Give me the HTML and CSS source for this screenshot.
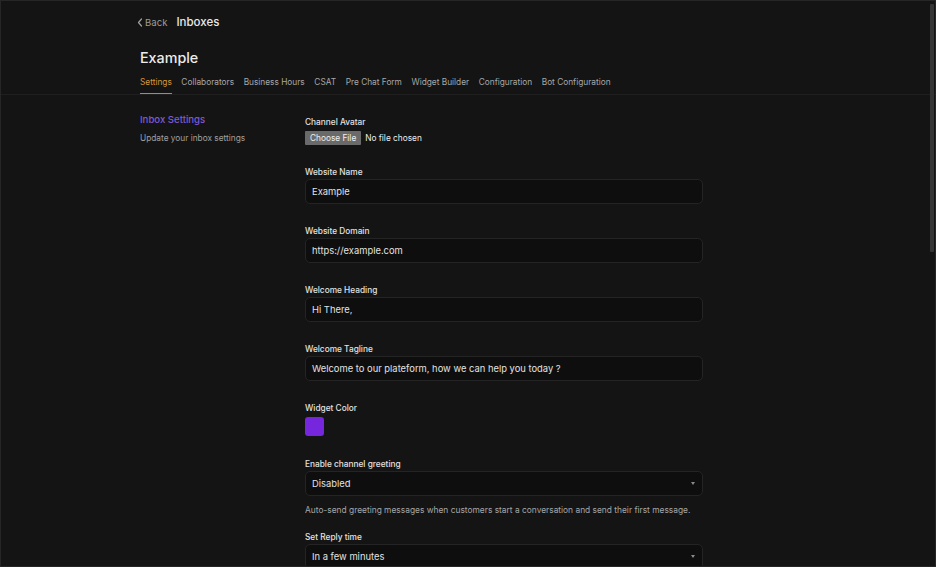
FILE: index.html
```html
<!DOCTYPE html>
<html>
<head>
<meta charset="utf-8">
<link rel="stylesheet" href="styles.css">
</head>
<body>
<div class="page">
  <header class="head">
    <div class="crumbs">
      <a class="back"><svg class="chev" width="6" height="9" viewBox="0 0 6 9"><path d="M4.5 1 L1.5 4.5 L4.5 8" fill="none" stroke="currentColor" stroke-width="1.2" stroke-linecap="round" stroke-linejoin="round"/></svg>Back</a>
      <span class="crumb-title">Inboxes</span>
    </div>
    <h1 class="title">Example</h1>
    <nav class="tabs">
      <span class="tab active">Settings</span>
      <span class="tab">Collaborators</span>
      <span class="tab">Business Hours</span>
      <span class="tab">CSAT</span>
      <span class="tab">Pre Chat Form</span>
      <span class="tab">Widget Builder</span>
      <span class="tab">Configuration</span>
      <span class="tab">Bot Configuration</span>
    </nav>
  </header>
  <main class="body">
    <aside class="side">
      <div class="side-title">Inbox Settings</div>
      <div class="side-sub">Update your inbox settings</div>
    </aside>
    <section class="form">
      <div class="field">
        <div class="label avatar-label">Channel Avatar</div>
        <div class="file"><span class="file-btn">Choose File</span><span class="file-text">No file chosen</span></div>
      </div>
      <div class="field">
        <div class="label">Website Name</div>
        <div class="input">Example</div>
      </div>
      <div class="field">
        <div class="label">Website Domain</div>
        <div class="input">https://example.com</div>
      </div>
      <div class="field">
        <div class="label">Welcome Heading</div>
        <div class="input">Hi There,</div>
      </div>
      <div class="field">
        <div class="label">Welcome Tagline</div>
        <div class="input">Welcome to our plateform, how we can help you today ?</div>
      </div>
      <div class="field color-field">
        <div class="label">Widget Color</div>
        <div class="swatch"></div>
      </div>
      <div class="field tight">
        <div class="label">Enable channel greeting</div>
        <div class="input select">Disabled<span class="caret"></span></div>
        <div class="help">Auto-send greeting messages when customers start a conversation and send their first message.</div>
      </div>
      <div class="field">
        <div class="label">Set Reply time</div>
        <div class="input select">In a few minutes<span class="caret"></span></div>
      </div>
    </section>
  </main>
  <div class="scroll-thumb"></div>
</div>
</body>
</html>
```

FILE: styles.css
```css
* { box-sizing: border-box; }
html, body { margin: 0; padding: 0; background: #141414; overflow: hidden; }
body { font-family: Inter, "Noto Sans", sans-serif; color: #e6e6e6; }
.page {
  position: relative;
  width: 936px;
  height: 567px;
  border: 1px solid #262626;
  overflow: hidden;
  background: #141414;
}
.head {
  border-bottom: 1px solid #1f1f1f;
  padding: 0 0 0 139px;
}
.crumbs {
  display: flex;
  align-items: center;
  height: 20px;
  margin-top: 11px;
  margin-left: -3px;
}
.back {
  display: flex;
  align-items: center;
  gap: 2px;
  color: #9b9b9b;
  font-size: 9.6px;
  margin-right: 9px;
}
.chev { color: #a0a0a0; }
.crumb-title {
  font-size: 11.5px;
  font-weight: 500;
  color: #e8e8e8;
}
.title {
  margin: 16px 0 0 0;
  font-size: 14.3px;
  line-height: 20px;
  font-weight: 500;
  color: #ececec;
}
.tabs {
  display: flex;
  gap: 9.6px;
  margin-top: 8px;
}
.tab {
  font-size: 8.3px;
  line-height: 11px;
  padding: 1px 0 5px;
  color: #a8a8a8;
  border-bottom: 1px solid transparent;
}
.tab.active {
  color: #d9973a;
  border-bottom-color: #c0853a;
}
.body {
  display: flex;
  padding: 19px 0 0 139px;
}
.side { width: 165px; }
.side-title {
  font-size: 9.6px;
  line-height: 12px;
  color: #7d5ad9;
  font-weight: 500;
}
.side-sub {
  margin-top: 6px;
  font-size: 8.3px;
  line-height: 12px;
  color: #a0a0a0;
}
.form { width: 398px; margin-top: 2px; }
.field { margin-bottom: 21px; }
.field.color-field { margin-bottom: 22px; }
.field.tight { margin-bottom: 15px; }
.label {
  font-size: 8.3px;
  line-height: 12px;
  font-weight: 500;
  color: #e2e2e2;
  margin-bottom: 1px;
}
.label.avatar-label { margin-bottom: 2px; }
.file {
  display: flex;
  align-items: center;
  height: 16px;
  margin-top: 2px;
  margin-bottom: -1px;
  font-size: 8.3px;
}
.file-btn {
  background: #6a6a6a;
  color: #f0f0f0;
  height: 14px;
  line-height: 14px;
  padding: 0 5px;
  border-radius: 1px;
}
.file-text { margin-left: 4px; color: #ededed; }
.input {
  position: relative;
  height: 25px;
  line-height: 23px;
  padding: 0 6px;
  background: #0e0e0e;
  border: 1px solid #242424;
  border-radius: 5px;
  font-size: 9.4px;
  color: #e2e2e2;
}
.caret {
  position: absolute;
  right: 7px;
  top: 10px;
  width: 0;
  height: 0;
  border-left: 2.5px solid transparent;
  border-right: 2.5px solid transparent;
  border-top: 3px solid #8a8a8a;
}
.swatch {
  width: 19px;
  height: 19px;
  margin-top: 3px;
  border-radius: 3px;
  background: #7626dc;
}
.help {
  margin-top: 8px;
  font-size: 8.4px;
  line-height: 12px;
  color: #a6a6a6;
}
.scroll-thumb {
  position: absolute;
  right: 1px;
  top: 3px;
  width: 4px;
  height: 248px;
  background: #353535;
  border-radius: 1px;
}
```
